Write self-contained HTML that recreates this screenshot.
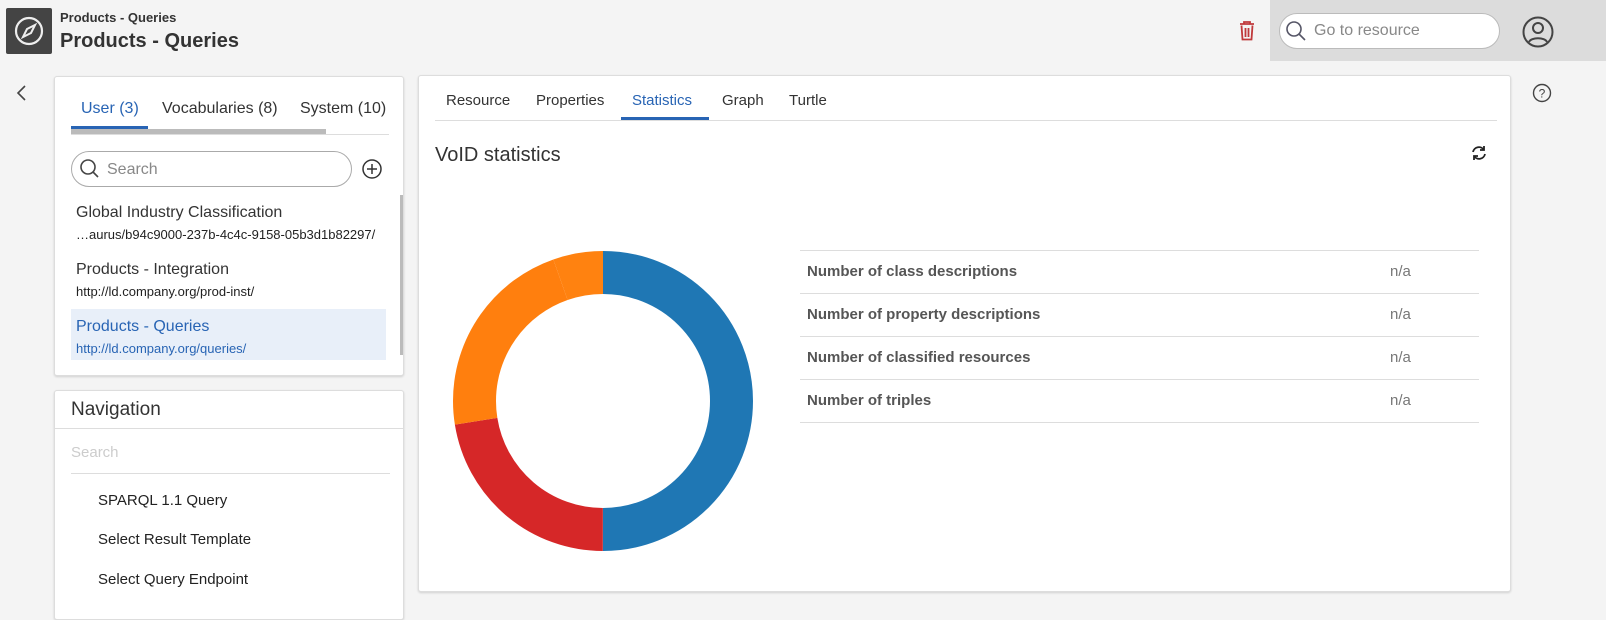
<!DOCTYPE html>
<html><head><style>
*{box-sizing:border-box;margin:0;padding:0}
body{width:1606px;height:606px;background:#f4f4f4;font-family:"Liberation Sans",sans-serif;color:#333;position:relative;overflow:hidden}
.abs{position:absolute}
.card{position:absolute;background:#fff;border:1px solid #ddd;border-radius:3px;box-shadow:0 1px 2px rgba(0,0,0,.15)}
</style></head><body>
<div class="abs" style="left:6px;top:8px;width:46px;height:46px;background:#444;border-radius:2px">
<svg width="46" height="46"><circle cx="23" cy="23" r="13" fill="none" stroke="#eee" stroke-width="2.2"/><path d="M29 17 L25 25 L17 29 L21 21 Z" fill="none" stroke="#eee" stroke-width="2"/></svg></div>
<div class="abs" style="left:60px;top:10px;font-size:13px;font-weight:bold;color:#333">Products - Queries</div>
<div class="abs" style="left:60px;top:30px;font-size:20px;font-weight:bold;color:#333">Products - Queries</div>
<svg class="abs" style="left:1238px;top:20px" width="18" height="22"><path d="M2 4h14M6 4V2h6v2M3.5 5.5l1 14h9l1-14M7.5 8v9M10.5 8v9" fill="none" stroke="#c0393b" stroke-width="1.8"/></svg>
<div class="abs" style="left:1270px;top:0;width:336px;height:61px;background:#dcdcdc"></div>
<div class="abs" style="left:1279px;top:13px;width:221px;height:36px;background:#fff;border:1px solid #bbb;border-radius:18px"></div>
<svg class="abs" style="left:1285px;top:20px" width="22" height="22"><circle cx="9" cy="9" r="7" fill="none" stroke="#556" stroke-width="1.6"/><path d="M14 14l6 6" stroke="#556" stroke-width="1.6"/></svg>
<div class="abs" style="left:1314px;top:22px;font-size:16px;color:#888">Go to resource</div>
<svg class="abs" style="left:1520px;top:14px" width="36" height="36"><circle cx="18" cy="18" r="14.5" fill="none" stroke="#444" stroke-width="2"/><circle cx="18" cy="14" r="5" fill="none" stroke="#444" stroke-width="2"/><path d="M9 28c2-5 16-5 18 0" fill="none" stroke="#444" stroke-width="2"/></svg>
<svg class="abs" style="left:14px;top:84px" width="14" height="18"><path d="M11 2L4 9l7 7" fill="none" stroke="#444" stroke-width="1.6"/></svg>
<svg class="abs" style="left:1532px;top:83px" width="20" height="20"><circle cx="10" cy="10" r="8.5" fill="none" stroke="#444" stroke-width="1.4"/><text x="10" y="14.5" font-size="12" text-anchor="middle" fill="#444" font-family="Liberation Sans">?</text></svg>

<div class="card" style="left:54px;top:76px;width:350px;height:300px">
<div class="abs" style="left:26px;top:23px;font-size:16px;color:#2864b4">User (3)</div>
<div class="abs" style="left:107px;top:23px;font-size:16px;color:#333">Vocabularies (8)</div>
<div class="abs" style="left:245px;top:23px;font-size:16px;color:#333">System (10)</div>
<div class="abs" style="left:16px;top:49px;width:77px;height:3px;background:#2864b4"></div>
<div class="abs" style="left:16px;top:52px;width:255px;height:5px;background:#bbb"></div>
<div class="abs" style="left:16px;top:57px;width:318px;height:1px;background:#ddd"></div>
<div class="abs" style="left:16px;top:74px;width:281px;height:36px;border:1px solid #aaa;border-radius:18px"></div>
<svg class="abs" style="left:24px;top:81px" width="22" height="22"><circle cx="9" cy="9" r="7" fill="none" stroke="#444" stroke-width="1.6"/><path d="M14 14l5 5" stroke="#444" stroke-width="1.6"/></svg>
<div class="abs" style="left:52px;top:84px;font-size:16px;color:#888">Search</div>
<svg class="abs" style="left:306px;top:81px" width="22" height="22"><circle cx="11" cy="11" r="9" fill="none" stroke="#333" stroke-width="1.5"/><path d="M11 6v10M6 11h10" stroke="#333" stroke-width="1.5"/></svg>
<div class="abs" style="left:345px;top:118px;width:3px;height:160px;background:#bbb"></div>
<div class="abs" style="left:21px;top:127px;font-size:16px;color:#333">Global Industry Classification</div>
<div class="abs" style="left:21px;top:150px;font-size:13px;color:#222">…aurus/b94c9000-237b-4c4c-9158-05b3d1b82297/</div>
<div class="abs" style="left:21px;top:184px;font-size:16px;color:#333">Products - Integration</div>
<div class="abs" style="left:21px;top:207px;font-size:13px;color:#222">http://ld.company.org/prod-inst/</div>
<div class="abs" style="left:16px;top:232px;width:315px;height:51px;background:#e8eff9"></div>
<div class="abs" style="left:21px;top:241px;font-size:16px;color:#2864b4">Products - Queries</div>
<div class="abs" style="left:21px;top:264px;font-size:13px;color:#2864b4">http://ld.company.org/queries/</div>
</div>

<div class="card" style="left:54px;top:390px;width:350px;height:230px">
<div class="abs" style="left:16px;top:8px;font-size:19px;color:#333">Navigation</div>
<div class="abs" style="left:0;top:37px;width:349px;height:1px;background:#ddd"></div>
<div class="abs" style="left:16px;top:53px;font-size:15px;color:#ccc">Search</div>
<div class="abs" style="left:16px;top:82px;width:319px;height:1px;background:#ddd"></div>
<div class="abs" style="left:43px;top:101px;font-size:15px;color:#222">SPARQL 1.1 Query</div>
<div class="abs" style="left:43px;top:140px;font-size:15px;color:#222">Select Result Template</div>
<div class="abs" style="left:43px;top:180px;font-size:15px;color:#222">Select Query Endpoint</div>
</div>

<div class="card" style="left:418px;top:75px;width:1093px;height:517px">
<div class="abs" style="left:27px;top:16px;font-size:15px;color:#333">Resource</div>
<div class="abs" style="left:117px;top:16px;font-size:15px;color:#333">Properties</div>
<div class="abs" style="left:213px;top:16px;font-size:15px;color:#2864b4">Statistics</div>
<div class="abs" style="left:303px;top:16px;font-size:15px;color:#333">Graph</div>
<div class="abs" style="left:370px;top:16px;font-size:15px;color:#333">Turtle</div>
<div class="abs" style="left:202px;top:41px;width:88px;height:3px;background:#2864b4"></div>
<div class="abs" style="left:16px;top:44px;width:1062px;height:1px;background:#ddd"></div>
<div class="abs" style="left:16px;top:68px;font-size:20px;color:#333">VoID statistics</div>
<svg class="abs" style="left:1051px;top:68px" width="18" height="18"><path d="M3 8a6 6 0 0 1 11-2M15 10a6 6 0 0 1-11 2" fill="none" stroke="#222" stroke-width="1.8"/><path d="M14 2v4h-4M4 16v-4h4" fill="none" stroke="#222" stroke-width="1.8"/></svg>
<div class="abs" style="left:381px;top:174px;width:679px;border-top:1px solid #ddd">
<div style="height:43px;border-bottom:1px solid #ddd;position:relative"><span class="abs" style="left:7px;top:12px;font-size:15px;font-weight:bold;color:#555">Number of class descriptions</span><span class="abs" style="left:590px;top:12px;font-size:15px;color:#777">n/a</span></div>
<div style="height:43px;border-bottom:1px solid #ddd;position:relative"><span class="abs" style="left:7px;top:12px;font-size:15px;font-weight:bold;color:#555">Number of property descriptions</span><span class="abs" style="left:590px;top:12px;font-size:15px;color:#777">n/a</span></div>
<div style="height:43px;border-bottom:1px solid #ddd;position:relative"><span class="abs" style="left:7px;top:12px;font-size:15px;font-weight:bold;color:#555">Number of classified resources</span><span class="abs" style="left:590px;top:12px;font-size:15px;color:#777">n/a</span></div>
<div style="height:43px;border-bottom:1px solid #ddd;position:relative"><span class="abs" style="left:7px;top:12px;font-size:15px;font-weight:bold;color:#555">Number of triples</span><span class="abs" style="left:590px;top:12px;font-size:15px;color:#777">n/a</span></div>
</div>
</div>
<svg class="abs" style="left:0;top:0" width="1606" height="606">
<g transform="rotate(-90 603 401)" fill="none" stroke-width="43">
<circle cx="603" cy="401" r="128.5" stroke="#1f77b4" stroke-dasharray="403.7 1000"/>
<circle cx="603" cy="401" r="128.5" stroke="#d62728" stroke-dasharray="0 403.7 181.2 1000"/>
<circle cx="603" cy="401" r="128.5" stroke="#ff7f0e" stroke-dasharray="0 584.9 178.8 1000"/>
<circle cx="603" cy="401" r="128.5" stroke="#ff8210" stroke-dasharray="0 763.7 43.7 1000"/>
</g></svg>
</body></html>
